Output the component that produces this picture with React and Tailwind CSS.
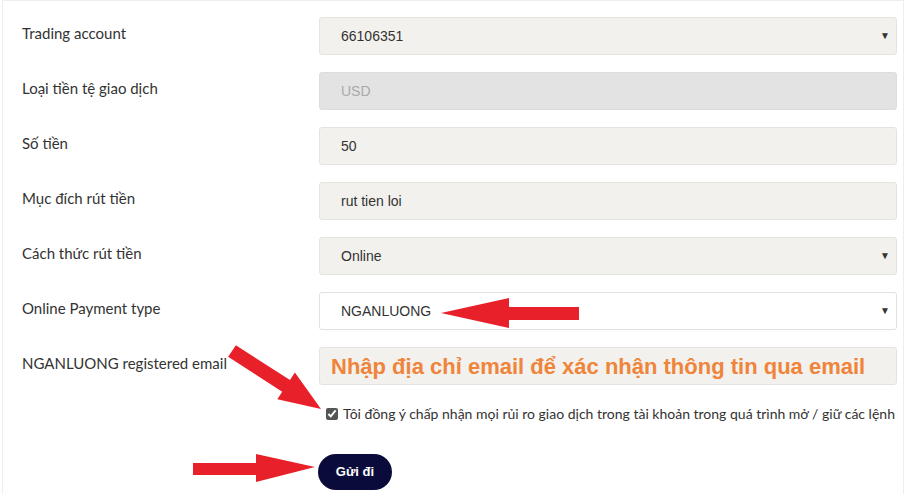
import React from "react"

const labelFont = { fontFamily: "Lato, 'Open Sans', sans-serif" }

const Field = ({ children, variant = "plain", arrow = false }) => {
  const tone =
    variant === "disabled"
      ? "bg-[#e3e3e3] border-[#dddddd] text-[#a9a9a9]"
      : variant === "white"
      ? "bg-white border-[#e2e2e2] text-[#333]"
      : "bg-[#f2f1ed] border-[#e5e3de] text-[#333]"
  return (
    <div
      className={`flex-1 h-[38px] rounded-[3px] border ${tone} flex items-center pl-[21px] pr-[6px] font-['Liberation_Sans',Arial,sans-serif] text-[14px]`}
    >
      <span className="flex-1">{children}</span>
      {arrow && <span className="text-[10px] text-[#333] leading-none">▼</span>}
    </div>
  )
}

const Row = ({ label, children }) => (
  <div className="flex">
    <div className="w-[297px] pt-[6px] text-[15px] leading-5 text-[#333]" style={labelFont}>
      {label}
    </div>
    {children}
  </div>
)

const Arrows = () => (
  <svg className="absolute left-0 top-0 pointer-events-none" width="904" height="494">
    {/* NGANLUONG arrow */}
    <polygon
      fill="#e8202a"
      points="579,307 509,307 509,298 441,313 509,328 509,320 579,320"
    />
    {/* email arrow */}
    <polygon
      fill="#e8202a"
      points="235.9,345.2 290,380.1 294.9,372.6 321,409 277.3,399.2 282.2,391.7 228.1,356.8"
    />
    {/* button arrow */}
    <polygon
      fill="#e8202a"
      points="193,463 256,463 256,454 315,467 256,482 256,475 193,475"
    />
  </svg>
)

export default function App() {
  return (
    <div className="relative w-[904px] h-[494px] overflow-hidden bg-white">
      <div className="ml-[2px] w-[902px] h-[494px] border-x border-t border-[#eeeeee] pl-[19px] pr-[6px] pt-[16px]">
        <div className="flex flex-col gap-[17px]">
          <Row label="Trading account">
            <Field arrow>66106351</Field>
          </Row>
          <Row label="Loại tiền tệ giao dịch">
            <Field variant="disabled">USD</Field>
          </Row>
          <Row label="Số tiền">
            <Field>50</Field>
          </Row>
          <Row label="Mục đích rút tiền">
            <Field>rut tien loi</Field>
          </Row>
          <Row label="Cách thức rút tiền">
            <Field arrow>Online</Field>
          </Row>
          <Row label="Online Payment type">
            <Field variant="white" arrow>NGANLUONG</Field>
          </Row>
          <Row label="NGANLUONG registered email">
            <div className="flex-1 h-[38px] rounded-[3px] border bg-[#f2f1ed] border-[#e5e3de] flex items-center pl-[11px]">
              <span className="font-['Liberation_Sans',Arial,sans-serif] font-bold text-[22px] text-[#ef843a]">
                Nhập địa chỉ email để xác nhận thông tin qua email
              </span>
            </div>
          </Row>
        </div>

        <div className="ml-[304px] mt-[18px] flex items-center gap-[5px] whitespace-nowrap">
          <input type="checkbox" defaultChecked className="w-[12px] h-[12px] m-0 accent-[#555]" />
          <span className="text-[14px] text-[#333]" style={labelFont}>
            Tôi đồng ý chấp nhận mọi rủi ro giao dịch trong tài khoản trong quá trình mở / giữ các lệnh
          </span>
        </div>

        <button className="ml-[296px] mt-[30px] w-[74px] h-[36px] rounded-full bg-[#0b0b3b] text-white text-[13px] font-bold font-['Liberation_Sans',Arial,sans-serif]">
          Gửi đi
        </button>
      </div>
      <Arrows />
    </div>
  )
}
